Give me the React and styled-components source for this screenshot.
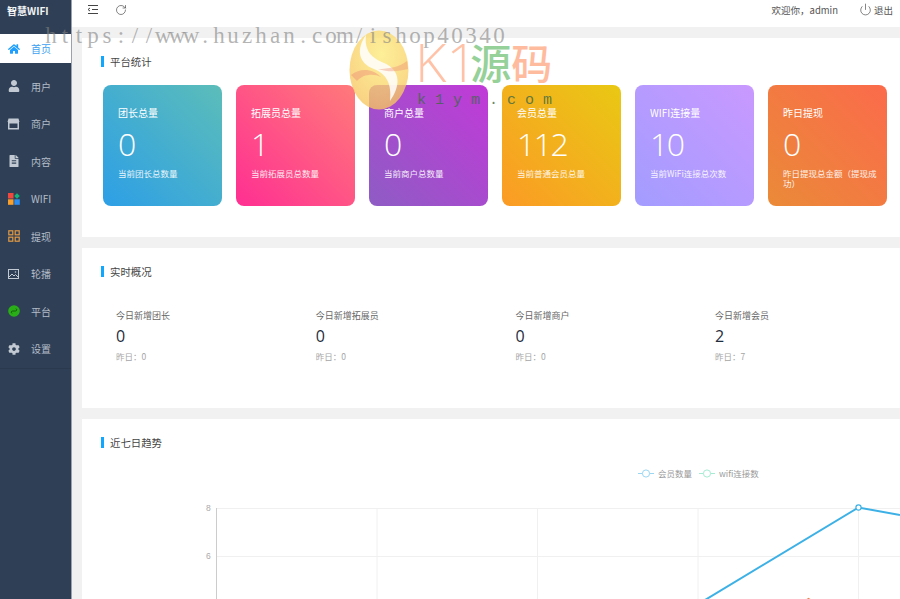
import React from 'react';
import styled, { createGlobalStyle } from 'styled-components';
import { FaHome, FaUser, FaFileAlt, FaCog } from 'react-icons/fa';
import { RotateCw, Power } from 'lucide-react';

const Global = createGlobalStyle`
  html, body { margin: 0; padding: 0; height: 100%; overflow: hidden; background: #f1f1f1; }
  body { font-family: "Noto Sans CJK SC", "Liberation Sans", sans-serif; }
  #root { height: 100%; }
`;

const Page = styled.div`
  position: relative;
  display: flex;
  width: 900px;
  height: 599px;
  overflow: hidden;
`;

const Sidebar = styled.aside`
  flex: 0 0 71px;
  background: #2f4056;
  border-right: 1px solid #9aa3ad;
  display: flex;
  flex-direction: column;
`;

const Brand = styled.div`
  height: 34px;
  box-sizing: border-box;
  padding: 3px 0 0 7px;
  line-height: 16px;
  color: #f2f4f6;
  font-size: 10px;
  font-weight: 700;
  white-space: nowrap;
`;

const Nav = styled.nav`
  display: flex;
  flex-direction: column;
  gap: 8.5px;
  padding-bottom: 5px;
  border-bottom: 1px solid #2a394d;
`;

const NavItem = styled.div`
  height: 29px;
  display: flex;
  align-items: center;
  padding-left: 7px;
  gap: 11px;
  background: ${p => (p.$active ? '#fff' : 'transparent')};
  color: ${p => (p.$active ? '#3c9ff2' : '#b4bcc8')};
  font-size: 10px;
`;

const NavIcon = styled.span`
  width: 13px;
  height: 13px;
  display: flex;
  align-items: center;
  justify-content: center;
  color: ${p => p.$color || '#c2c9d2'};
  font-size: 12px;
`;

const Main = styled.main`
  flex: 1;
  min-width: 0;
  display: flex;
  flex-direction: column;
`;

const Topbar = styled.header`
  height: 27px;
  flex: none;
  background: #fff;
  display: flex;
  align-items: center;
  padding: 0 7px 8px 15px;
  box-sizing: border-box;
  color: #444;
`;

const TopIcons = styled.div`
  display: flex;
  align-items: center;
  gap: 16px;
`;

const TopRight = styled.div`
  margin-left: auto;
  display: flex;
  align-items: center;
  font-size: 9.5px;
  color: #555;
`;

const Welcome = styled.span`
  margin-right: 21px;
`;

const Logout = styled.span`
  display: flex;
  align-items: center;
  gap: 2px;
`;

const Content = styled.div`
  flex: 1;
  min-height: 0;
  padding: 11px 0 0 10px;
  display: flex;
  flex-direction: column;
  gap: 11px;
`;

const Panel = styled.section`
  flex: none;
  background: #fff;
  box-sizing: border-box;
  height: ${p => p.$h}px;
  padding: 15px 0 0 19px;
`;

const PanelTitle = styled.h2`
  margin: 0;
  height: 17px;
  display: flex;
  align-items: center;
  font-size: 10.4px;
  font-weight: 400;
  color: #444;
  &::before {
    content: '';
    width: 3px;
    height: 11px;
    background: #12a7ff;
    margin-right: 6px;
  }
`;

const Cards = styled.div`
  display: flex;
  gap: 14px;
  margin: 15px 0 0 2px;
`;

const Card = styled.div`
  flex: 0 0 119px;
  height: 121px;
  box-sizing: border-box;
  padding: 21px 8px 0 15px;
  border-radius: 8px;
  color: #fff;
  background: linear-gradient(45deg, ${p => p.$from}, ${p => p.$to});
`;

const CardTitle = styled.div`
  font-size: 10px;
  line-height: 14px;
  white-space: nowrap;
`;

const CardValue = styled.div`
  font-family: "Open Sans", sans-serif;
  font-weight: 300;
  font-size: 32px;
  line-height: 44px;
  letter-spacing: -1.5px;
  margin-top: 2px;
`;

const CardNote = styled.div`
  font-size: 8.5px;
  line-height: 10px;
  margin-top: 2px;
  opacity: 0.9;
`;

const Stats = styled.div`
  display: grid;
  grid-template-columns: repeat(4, 199.7px);
  margin: 30px 0 0 15px;
`;

const Stat = styled.div`
  display: flex;
  flex-direction: column;
`;

const StatLabel = styled.div`
  font-size: 9px;
  line-height: 12px;
  color: #666;
`;

const StatValue = styled.div`
  font-family: "Open Sans", sans-serif;
  font-size: 16px;
  line-height: 22px;
  margin-top: 3px;
  color: #1f2d3d;
`;

const StatNote = styled.div`
  font-size: 8.5px;
  line-height: 12px;
  margin-top: 3px;
  color: #a5a5a5;
`;

const ChartWrap = styled.div`
  margin: 8.5px 0 0 -19px;
`;

const Watermark = styled.div`
  position: absolute;
  left: 0;
  top: 0;
  width: 900px;
  height: 130px;
  pointer-events: none;
`;

const UrlMark = styled.div`
  position: absolute;
  left: 44px;
  top: 22px;
  display: flex;
  font-family: "Liberation Serif", serif;
  font-size: 23px;
  line-height: 28px;
  color: rgba(130, 130, 130, 0.6);
  white-space: nowrap;
`;

const UrlChar = styled.span`
  flex: none;
  width: 14px;
  display: flex;
  justify-content: center;
`;

const LogoGlyph = styled.svg`
  position: absolute;
  left: 348px;
  top: 27px;
`;

const BrandMark = styled.div`
  position: absolute;
  left: 415px;
  top: 31px;
  display: flex;
  align-items: center;
  line-height: 60px;
  white-space: nowrap;
`;

const BrandPart = styled.span`
  color: ${p => p.$color};
  font-family: ${p => (p.$latin ? '"Open Sans", sans-serif' : 'inherit')};
  font-size: ${p => p.$size}px;
  font-weight: ${p => (p.$latin ? 300 : 500)};
  margin-right: ${p => p.$gap || 0}px;
  opacity: 0.6;
`;

const DomainMark = styled.div`
  position: absolute;
  left: 417px;
  top: 92px;
  font-family: "Liberation Mono", monospace;
  font-size: 15px;
  line-height: 18px;
  letter-spacing: 9px;
  color: rgba(60, 105, 70, 0.8);
  white-space: nowrap;
`;

const StoreIcon = () => (
  <svg width="13" height="12" viewBox="0 0 13 12" fill="none">
    <path d="M1.5 0.5h10l1 3.5H.5z" fill="#c2c9d2" />
    <rect x="1" y="4" width="11" height="7.5" fill="#c2c9d2" />
    <rect x="2.5" y="5.5" width="8" height="4.5" fill="#2f4056" />
  </svg>
);

const WifiIcon = () => (
  <svg width="12" height="12" viewBox="0 0 12 12">
    <rect x="0" y="0" width="5.5" height="5.5" fill="#f0483e" />
    <path d="M9 0.2l2.8 2.8L9 5.8 6.2 3z" fill="#12b27c" />
    <rect x="0" y="6.3" width="5.5" height="5.5" fill="#f9a02c" />
    <rect x="6.3" y="6.3" width="5.5" height="5.5" fill="#2d8cf0" />
  </svg>
);

const GridIcon = () => (
  <svg width="12" height="12" viewBox="0 0 12 12" fill="none" stroke="#e29a45" strokeWidth="1.2">
    <rect x=".8" y=".8" width="4" height="4" />
    <rect x="7.2" y=".8" width="4" height="4" />
    <rect x=".8" y="7.2" width="4" height="4" />
    <rect x="7.2" y="7.2" width="4" height="4" />
  </svg>
);

const PictureIcon = () => (
  <svg width="11" height="10" viewBox="0 0 11 10" fill="none" stroke="#c2c9d2" strokeWidth="1">
    <rect x=".5" y=".5" width="10" height="9" />
    <path d="M1 8l3-3 2 2 1.5-1.5L10 8" />
    <circle cx="7.5" cy="3" r=".8" fill="#c2c9d2" stroke="none" />
  </svg>
);

const PlatformIcon = () => (
  <svg width="12" height="12" viewBox="0 0 12 12">
    <circle cx="6" cy="6" r="5.8" fill="#2aae17" />
    <path d="M4 8.4c-1.2-.6-.8-2.4.5-2.4h3c1.3 0 1.7-1.8.5-2.4" fill="none" stroke="#14590c" strokeWidth="1" />
  </svg>
);

const IndentIcon = () => (
  <svg width="12" height="11" viewBox="0 0 12 11" fill="none" stroke="#444" strokeWidth="1">
    <path d="M1 1.5h10M5 5.5h6M1 9.5h10" />
    <path d="M3 4L1 5.5 3 7" />
  </svg>
);

const navItems = [
  { label: '首页', icon: <FaHome />, active: true, color: '#1e9fff' },
  { label: '用户', icon: <FaUser /> },
  { label: '商户', icon: <StoreIcon /> },
  { label: '内容', icon: <FaFileAlt /> },
  { label: 'WIFI', icon: <WifiIcon /> },
  { label: '提现', icon: <GridIcon /> },
  { label: '轮播', icon: <PictureIcon /> },
  { label: '平台', icon: <PlatformIcon /> },
  { label: '设置', icon: <FaCog /> },
];

const cards = [
  { t: '团长总量', v: '0', n: '当前团长总数量', from: '#2d9fe6', to: '#5cbdb9' },
  { t: '拓展员总量', v: '1', n: '当前拓展员总数量', from: '#ff2f92', to: '#ff7a7a' },
  { t: '商户总量', v: '0', n: '当前商户总数量', from: '#8e5cc4', to: '#c13ad8' },
  { t: '会员总量', v: '112', n: '当前普通会员总量', from: '#fb9b25', to: '#e9c814' },
  { t: 'WIFI连接量', v: '10', n: '当前WiFi连接总次数', from: '#a39cff', to: '#c999ff' },
  { t: '昨日提现', v: '0', n: '昨日提现总金额（提现成功）', from: '#ea8a38', to: '#fb6b4b' },
];

const stats = [
  { l: '今日新增团长', v: '0', n: '昨日：0' },
  { l: '今日新增拓展员', v: '0', n: '昨日：0' },
  { l: '今日新增商户', v: '0', n: '昨日：0' },
  { l: '今日新增会员', v: '2', n: '昨日：7' },
];

const url = 'https://www.huzhan.com/ishop40340';

const Chart = () => (
  <svg width="818" height="145" viewBox="82 460 818 145" style={{ display: 'block' }}>
    <g stroke="#f0f0f0" strokeWidth="1">
      <line x1="216" y1="508.5" x2="900" y2="508.5" />
      <line x1="216" y1="556.5" x2="900" y2="556.5" />
      {[377, 537.5, 698, 858.5].map(x => (
        <line key={x} x1={x} y1="508" x2={x} y2="605" />
      ))}
    </g>
    <line x1="216.5" y1="508" x2="216.5" y2="605" stroke="#ccc" />
    <g fontSize="8.5" fill="#aaa" fontFamily='"Liberation Sans", sans-serif'>
      <text x="206" y="510.5">8</text>
      <text x="206" y="559">6</text>
    </g>
    <polyline points="705,600 858.5,507.5 900,515" fill="none" stroke="#3db1e6" strokeWidth="2" />
    <circle cx="858.5" cy="507.5" r="2.6" fill="#fff" stroke="#3db1e6" strokeWidth="1.2" />
    <path d="M806 599.5l2.5-1.8 2.5 1.8" fill="#f0854e" />
    <g fontSize="8.5" fill="#999">
      <line x1="638" y1="473.5" x2="654" y2="473.5" stroke="#9bd6f2" />
      <circle cx="646" cy="473.5" r="3.6" fill="#fff" stroke="#9bd6f2" />
      <text x="658" y="476.5">会员数量</text>
      <line x1="699" y1="473.5" x2="715" y2="473.5" stroke="#a6ecd3" />
      <circle cx="707" cy="473.5" r="3.6" fill="#fff" stroke="#a6ecd3" />
      <text x="719" y="476.5">wifi连接数</text>
    </g>
  </svg>
);

export default function App() {
  return (
    <Page>
      <Global />
      <Sidebar>
        <Brand>智慧WIFI</Brand>
        <Nav>
          {navItems.map(i => (
            <NavItem key={i.label} $active={i.active}>
              <NavIcon $color={i.color}>{i.icon}</NavIcon>
              <span>{i.label}</span>
            </NavItem>
          ))}
        </Nav>
      </Sidebar>
      <Main>
        <Topbar>
          <TopIcons>
            <IndentIcon />
            <RotateCw size={12} strokeWidth={1.3} color="#444" />
          </TopIcons>
          <TopRight>
            <Welcome>欢迎你，admin</Welcome>
            <Logout>
              <Power size={13} strokeWidth={1.2} color="#444" />
              退出
            </Logout>
          </TopRight>
        </Topbar>
        <Content>
          <Panel $h={199}>
            <PanelTitle>平台统计</PanelTitle>
            <Cards>
              {cards.map(c => (
                <Card key={c.t} $from={c.from} $to={c.to}>
                  <CardTitle>{c.t}</CardTitle>
                  <CardValue>{c.v}</CardValue>
                  <CardNote>{c.n}</CardNote>
                </Card>
              ))}
            </Cards>
          </Panel>
          <Panel $h={160}>
            <PanelTitle>实时概况</PanelTitle>
            <Stats>
              {stats.map(s => (
                <Stat key={s.l}>
                  <StatLabel>{s.l}</StatLabel>
                  <StatValue>{s.v}</StatValue>
                  <StatNote>{s.n}</StatNote>
                </Stat>
              ))}
            </Stats>
          </Panel>
          <Panel $h={200}>
            <PanelTitle>近七日趋势</PanelTitle>
            <ChartWrap>
              <Chart />
            </ChartWrap>
          </Panel>
        </Content>
      </Main>
      <Watermark>
        <LogoGlyph width="62" height="84" viewBox="0 0 62 84">
          <defs>
            <radialGradient id="egg" cx="0.55" cy="0.3" r="0.8">
              <stop offset="0" stopColor="#fdeb7c" />
              <stop offset="1" stopColor="#f6c05c" />
            </radialGradient>
          </defs>
          <ellipse cx="31" cy="43" rx="29.5" ry="39.5" fill="url(#egg)" opacity="0.78" />
          <path d="M18 8C8 22 10 36 26 42c12 5 18 14 16 32 10-14 12-30-6-38-12-5-20-12-18-28z" fill="#fff" opacity="0.85" />
          <path d="M3 48c10-8 22-6 30 2-8-4-18-3-24 4z" fill="#ee8f75" opacity="0.45" />
          <path d="M30 42c10 0 22-2 29-8l1 8c-8 2-18 4-30 0z" fill="#ee8f75" opacity="0.4" />
        </LogoGlyph>
        <BrandMark>
          <BrandPart $latin $size={54} $color="#ff9a6e" $gap={-7}>K1</BrandPart>
          <BrandPart $size={41} $color="#4fb455">源</BrandPart>
          <BrandPart $size={41} $color="#ff8f5e">码</BrandPart>
        </BrandMark>
        <DomainMark>k1ym.com</DomainMark>
        <UrlMark>
          {url.split('').map((ch, i) => (
            <UrlChar key={i}>{ch}</UrlChar>
          ))}
        </UrlMark>
      </Watermark>
    </Page>
  );
}
